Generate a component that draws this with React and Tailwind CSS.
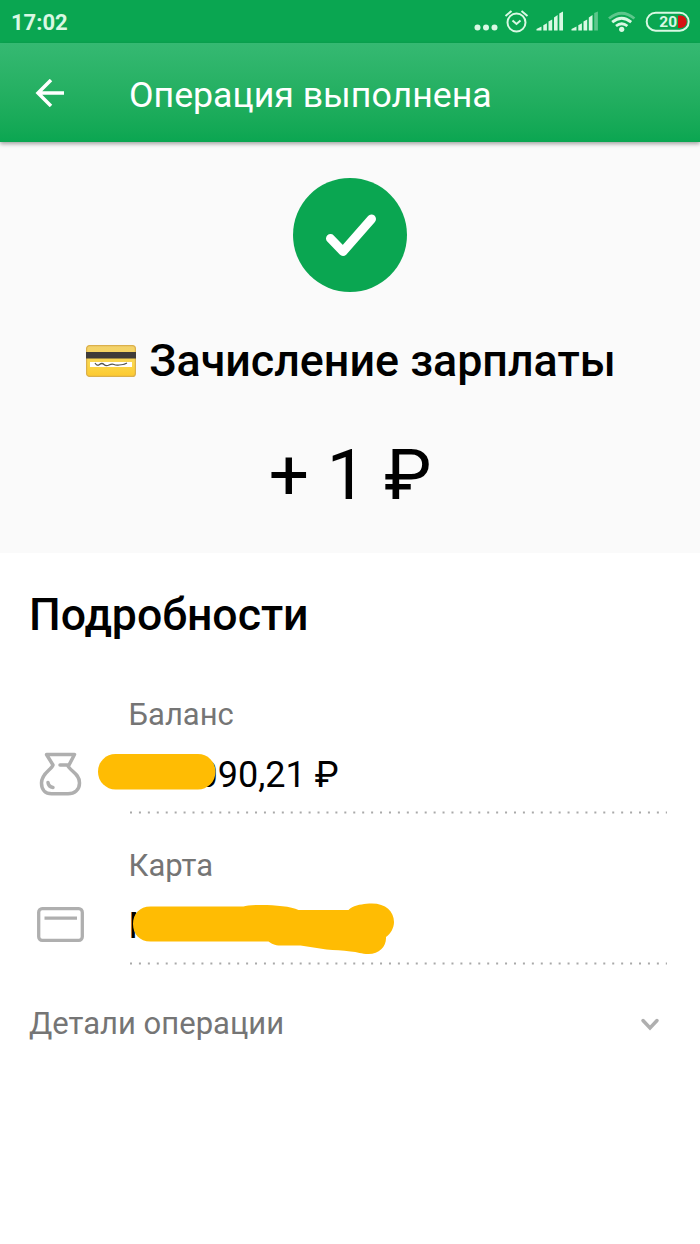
function StatusIcons() {
    return (
        <svg className="h-[43px] w-[230px] shrink-0" viewBox="470 0 230 43" fill="none">
            <g fill="#d9f8e3">
                <circle cx="477.500" cy="27.500" r="3" />
                <circle cx="486" cy="27.500" r="3" />
                <circle cx="494.500" cy="27.500" r="3" />
            </g>
            <g stroke="#d9f8e3" strokeWidth="2">
                <circle cx="516.500" cy="22.500" r="9" />
                <path d="M512.500 20.500l4 3.500 4-3.500M505.500 16l6-5M527.500 16l-6-5" />
            </g>
            <g fill="#d9f8e3">
                <path d="M536.500 30.500v-1.500l5-2.500v4zM543.300 25.200l3.600-2v7.300h-3.600zM548.500 21.500l3.700-2v11h-3.700zM554 17.500l3.600-2.500v15.500h-3.600zM559.300 13.500l3.700-2v19h-3.700z" />
                <path d="M571.500 30.500v-1.500l5-2.500v4zM578.300 25.200l3.600-2v7.300h-3.600zM583.500 21.500l3.700-2v11h-3.700zM588.800 17.500l3.700-2.500v15.500h-3.700z" />
                <path opacity="0.4" d="M594.200 13l3.700-1.500v19h-3.700z" />
                <circle cx="621.700" cy="29.300" r="2.600" />
            </g>
            <g stroke="#d9f8e3" strokeWidth="2.800">
                <path opacity="0.4" d="M609 18.500q12.700-10.500 25.400 0" />
                <path d="M612.200 22.200q9.500-7.800 19 0M616 26q5.700-4.600 11.400 0" />
            </g>
            <rect x="646.700" y="12.700" width="42" height="18" rx="9" stroke="#d9f8e3" strokeWidth="2" />
            <path d="M678 15.500h2.500a6.200 6.200 0 0 1 0 12.500H678z" fill="#d51212" />
            <text x="659.300" y="27.400" fill="#d9f8e3" fontFamily="Roboto, sans-serif" fontSize="15.500" fontWeight="700">
                20
            </text>
        </svg>
    );
}

function CardEmoji() {
    return (
        <svg className="h-8 w-[50px] shrink-0" viewBox="0 0 50 32">
            <defs>
                <linearGradient id="card" x1="0" y1="0" x2="0" y2="1">
                    <stop offset="0" stopColor="#f2d26d" />
                    <stop offset="0.6" stopColor="#fbd74b" />
                    <stop offset="1" stopColor="#fdc92f" />
                </linearGradient>
            </defs>
            <rect x="0.600" y="0.600" width="48.800" height="30.800" rx="3" fill="url(#card)" stroke="#dbb04b" strokeWidth="1.200" />
            <path d="M0 7h50v6.500H0z" fill="#3f3b38" />
            <path d="M4 17h42v5H4z" fill="#fff" />
            <path d="M9 18q2 3.500 4.500 1.500t4.500 0 5 .5 5-.5 5 .5 4-.5 4-1.500" fill="none" stroke="#55544f" strokeWidth="1.200" />
        </svg>
    );
}

function PurseIcon() {
    return (
        <svg className="h-11 w-12" viewBox="0 0 48 44" fill="none" stroke="#afafaf" strokeWidth="3.500" strokeLinecap="round" strokeLinejoin="round">
            <path d="M24 13H33L38.500 2.500H10.500L17 13C15.500 18 5.500 21 5.500 31C5.500 38 9.500 41.800 15.500 41.800H32C38.500 41.800 43.500 38 43.500 31C43.500 21 33.500 19 31.500 13" />
            <path d="M12 30.500Q12.500 34.800 17 35.500" />
        </svg>
    );
}

function CardIcon() {
    return (
        <svg className="h-11 w-12" viewBox="0 0 48 44" fill="none" stroke="#afafaf" strokeWidth="3.300">
            <rect x="2.700" y="5.700" width="43.600" height="31.600" rx="3.500" />
            <path d="M8.500 15.200h32.500" />
        </svg>
    );
}

function DetailRow({ label, icon, children }) {
    return (
        <div className="flex h-[151px] pl-9 pr-[33px]">
            <div className="w-[92.5px] shrink-0 pt-[60px]">{icon}</div>
            <div className="flex min-w-0 flex-1 flex-col">
                <p className="h-[46px] text-[31px] leading-[46px] text-[#757575]">{label}</p>
                <div className="relative h-[72px] pt-[13px] text-[36px] leading-[48px] text-black">
                    {children}
                </div>
                <svg className="h-1 w-full" aria-hidden="true">
                    <line x1="1" y1="2.500" x2="100%" y2="2.500" stroke="#a9a9a9" strokeWidth="2" strokeDasharray="2 6.930" />
                </svg>
            </div>
        </div>
    );
}

export default function App() {
    return (
        <div className="flex h-[1244px] w-[700px] flex-col overflow-hidden bg-white font-['Roboto',sans-serif]">
            <div className="flex h-[43px] shrink-0 items-center justify-between bg-[#0aa651] pl-[11px]">
                <span className="pt-px text-[22px] font-bold text-[#d9f8e3]">17:02</span>
                <StatusIcons />
            </div>

            <header className="z-10 flex h-[99px] shrink-0 items-center bg-linear-to-b from-[#35b972] to-[#0aa651] pl-[35px] shadow-[0_2px_4px_rgba(0,0,0,0.35)]">
                <svg className="h-7 w-[29px]" viewBox="0 0 29 28" fill="none" stroke="#fff" strokeWidth="3.500">
                    <path d="M29 14H3.500M16 1L3 14l13 13" />
                </svg>
                <h1 className="ml-[65px] pt-1 text-[35.7px] leading-[48px] text-white">Операция выполнена</h1>
            </header>

            <section className="flex h-[411px] shrink-0 flex-col items-center bg-[#fafafa] pt-9">
                <div className="flex h-[114px] w-[114px] items-center justify-center rounded-full bg-[#0aa651]">
                    <svg className="h-[114px] w-[114px]" viewBox="0 0 114 114" fill="none" stroke="#fff" strokeWidth="9" strokeLinecap="round" strokeLinejoin="round">
                        <path d="M37.500 60.500L50 73.500L78.500 41" />
                    </svg>
                </div>
                <div className="mt-[41px] flex h-14 items-center gap-[13px] pl-[2px]">
                    <CardEmoji />
                    <h2 className="whitespace-nowrap text-[44.8px] font-medium leading-14 text-black">Зачисление зарплаты</h2>
                </div>
                <p className="mt-11 whitespace-nowrap text-[71px] leading-[84px] text-black">+ 1 ₽</p>
            </section>

            <section className="flex flex-col pt-8">
                <h2 className="h-[107px] pl-[29px] text-[44.6px] font-medium leading-[60px] text-black">Подробности</h2>
                <DetailRow label="Баланс" icon={<PurseIcon />}>
                    <span className="pl-[69px]">090,21 ₽</span>
                    <svg className="absolute -left-[31.5px] top-[13px] h-10 w-[120px]" viewBox="0 -1 120 40">
                        <rect x="1" y="2" width="117.500" height="35.500" rx="17.500" fill="#ffbc03" />
                    </svg>
                </DetailRow>
                <DetailRow label="Карта" icon={<CardIcon />}>
                    <span>М</span>
                    <svg className="absolute left-0 top-[9px] h-[60px] w-[270px]" viewBox="128.500 898 270 60">
                        <path
                            d="M150 906.500H243C250 904 286 904 298 910H348C352 905.500 360 904.500 366 903.800C383 901.500 393.500 910 393.500 922C393.500 928 390 934 385.500 937C386 946 379 954 368 954C361 954 357 952 350 951.500C342 950 334 950.500 326 949.500L300 945.500H280C274 945.500 271 943.500 268 941.500H150C139 941.500 132.500 934 132.500 924S139 906.500 150 906.500Z"
                            fill="#ffbc03"
                        />
                    </svg>
                </DetailRow>
                <button className="flex h-[61px] items-center justify-between pl-[29px] pr-[39px] text-[31px] text-[#757575]">
                    Детали операции
                    <svg className="h-[14px] w-[22px]" viewBox="0 0 22 14" fill="none" stroke="#afafaf" strokeWidth="3.500" strokeLinecap="round">
                        <path d="M4 2.500l7 7.500L18 2.500" />
                    </svg>
                </button>
            </section>
        </div>
    );
}
